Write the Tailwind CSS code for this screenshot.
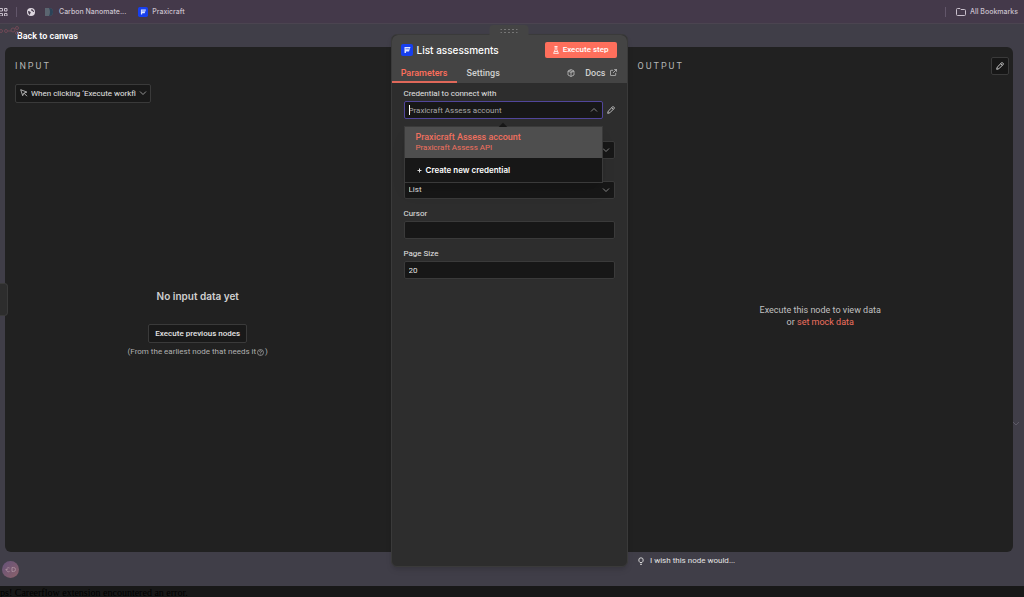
<!DOCTYPE html>
<html lang="en">
<head>
  <meta charset="UTF-8" />
  <meta name="viewport" content="width=device-width, initial-scale=1.0"/>
  <title>List assessments</title>
  <script src="https://cdn.jsdelivr.net/npm/@tailwindcss/browser@4"></script>
</head>
<body class="flex h-screen flex-col overflow-hidden bg-[#403e48] font-['Roboto',sans-serif] text-[8px] leading-3 text-[#e4e4e4]">

  <!-- Bookmarks bar -->
  <nav class="flex h-6 shrink-0 items-center border-b border-[#4b4450] bg-[#44394a] pt-px pr-1.5 font-['Inter',sans-serif] text-[7px] font-medium text-[#c9c0cc]">
    <svg class="size-2" viewBox="0 0 8 8" fill="none" stroke="#c9c0cc" stroke-width="1"><path d="M0 .5h2.500v2.500H0M4.500.5h2.500v2.500H4.500zM0 5.500h2.500V8H0M4.500 5.500h2.500V8H4.500z"/></svg>
    <span class="ml-2 h-2.5 w-px bg-[#62566a]"></span>
    <a href="#" class="ml-2.5 block" aria-label="Home page">
      <svg class="size-2" viewBox="0 0 16 16"><circle cx="8" cy="8" r="8" fill="#ddd6df"/><path d="M2 6l4 1 2 3-2 1v3C3 12 2 9 2 6zM9 2l-1 3 3 1 1 2 2 0C14 6 12 3 9 2z" fill="#44394a"/></svg>
    </a>
    <a href="#" class="ml-2.5 flex items-center gap-1.5">
      <svg class="size-2" viewBox="0 0 8 8"><path d="M0 0h4a4 4 0 010 8H0z" fill="#5b6570"/><path d="M4 0a4 4 0 010 8q2-4 0-8" fill="#2c4358"/></svg>
      Carbon Nanomate...
    </a>
    <a href="#" class="ml-3 flex items-center gap-1">
      <svg class="size-2.5" viewBox="0 0 12 12"><rect width="12" height="12" rx="2" fill="#173fee"/><path d="M3.500 3v6H5V7.500h3L9.500 3z" fill="#dfe6ff"/><path d="M4.500 4.800h4" stroke="#173fee" stroke-width=".7"/></svg>
      Praxicraft
    </a>
    <span class="ml-auto h-2.5 w-px bg-[#62566a]"></span>
    <a href="#" class="ml-2.5 flex items-center gap-1">
      <svg class="h-2 w-2.5" viewBox="0 0 10 8" fill="none" stroke="#c9c0cc"><path d="M.5 1.500q0-1 1-1H4l1 1h3.500q1 0 1 1v4q0 1-1 1h-7q-1 0-1-1z"/></svg>
      All Bookmarks
    </a>
  </nav>

  <main class="relative flex min-h-0 flex-1 flex-col pr-[11px] pl-[5px]">
    <!-- Canvas bits showing behind the panels -->
    <svg class="absolute top-0 left-0 h-3 w-5" viewBox="0 0 20 12" fill="none" stroke="#754957" stroke-width=".9"><circle cx="1" cy="7" r="1.500"/><circle cx="6" cy="7" r="1.500"/><path d="M8 7h3"/><circle cx="13" cy="6" r="2"/><circle cx="17" cy="4" r="1.500"/><circle cx="17" cy="9" r="1.500"/></svg>
    <svg class="absolute right-1 bottom-[158px] h-2 w-2" viewBox="0 0 8 8" fill="none" stroke="#5d5a66"><path d="M1 2l3 3 3-3"/></svg>

    <div class="flex h-[23px] shrink-0 items-center pt-px pl-3">
      <a href="#" class="text-[9px] font-semibold text-white">Back to canvas</a>
    </div>

    <div class="grid min-h-0 flex-1 grid-cols-[1fr_237px_1fr]">
      <!-- Input -->
      <section class="flex flex-col rounded-l-md bg-[#212121] px-2.5 pt-[13px]">
        <h2 class="text-[9px] tracking-[2px] text-[#b5b5b5]">INPUT</h2>
        <div class="relative mt-3 w-[136px] self-start">
          <select aria-label="Input node" class="block h-[19px] w-full appearance-none rounded-xs border border-[#3a3a3a] bg-[#191919] pr-3.5 pl-[15px] text-[8px] text-[#e4e4e4]">
            <option>When clicking ‘Execute workflow’</option>
          </select>
          <svg class="pointer-events-none absolute top-[5px] left-[5px] size-2" viewBox="0 0 8 8" fill="none" stroke="#d0d0d0" stroke-width=".8"><path d="M.7.7l2 6 1.200-2.600 3-1zM4 4.200l3 3"/></svg>
          <svg class="pointer-events-none absolute top-[5px] right-1 size-2" viewBox="0 0 8 8" fill="none" stroke="#a0a0a0" stroke-width=".9"><path d="M1 2.500l3 3 3-3"/></svg>
        </div>
        <div class="flex flex-1 flex-col items-center pt-[187px]">
          <p class="font-['Inter',sans-serif] text-[10px] font-semibold text-[#d0d0d0]">No input data yet</p>
          <button class="mt-[22px] h-[19px] rounded-xs border border-[#3a3a3a] bg-[#191919] px-1.5 text-[8px] font-medium text-[#e4e4e4]">Execute previous nodes</button>
          <p class="mt-[3px] flex items-center gap-px text-[#b0b0b0]">(From the earliest node that needs it
            <svg class="size-[7px]" viewBox="0 0 8 8" fill="none" stroke="#b0b0b0" stroke-width=".8"><circle cx="4" cy="4" r="3.400"/><path d="M2.800 3q.2-1 1.200-1t1.200 1q0 .6-1.200 1.200v.6M4 5.500v.7"/></svg>)
          </p>
        </div>
      </section>

      <!-- Node settings -->
      <section class="relative z-10 -mt-[13px] -mb-[15px] flex flex-col rounded-md border border-[#3a3a3a] bg-[#2d2d2d] shadow-md">
        <div class="absolute -top-[10px] left-1/2 flex h-[11px] w-[39px] -translate-x-1/2 items-center justify-center rounded-t-sm bg-[#444444]">
          <svg class="h-1 w-[17px]" viewBox="0 0 17 4" fill="#a8a8a8"><path d="M0 0h1v1H0zM4 0h1v1H4zM8 0h1v1H8zM12 0h1v1h-1zM16 0h1v1h-1zM0 3h1v1H0zM4 3h1v1H4zM8 3h1v1H8zM12 3h1v1h-1zM16 3h1v1h-1z"/></svg>
        </div>
        <header class="rounded-t-md bg-[#444444]">
          <div class="flex h-[30px] items-center pr-2.5 pl-[9px]">
            <svg class="size-3" viewBox="0 0 12 12"><rect width="12" height="12" rx="2" fill="#173fee"/><path d="M3.500 3v6H5V7.500h3L9.500 3z" fill="#dfe6ff"/><path d="M4.500 4.800h4" stroke="#173fee" stroke-width=".7"/></svg>
            <h1 class="ml-1 font-['Inter',sans-serif] text-[10px] font-medium text-white">List assessments</h1>
            <button class="ml-auto flex h-4 items-center gap-1 rounded-xs bg-[#ff6f5c] px-2 text-[8px] font-medium text-white">
              <svg class="h-2 w-1.5" viewBox="0 0 6 8" fill="none" stroke="#fff" stroke-width=".8"><path d="M1.500.5h3M2.200.5v3L.6 7.400h4.800L3.800 3.500v-3M1.500 5.500h3"/></svg>
              Execute step
            </button>
          </div>
          <div class="flex h-[18px] items-stretch pr-2.5 text-[9px] font-medium text-[#d0d0d0]">
            <button class="flex w-[65px] justify-center border-b-2 border-[#e0685a] pt-0.5 text-[#ff6f5c]">Parameters</button>
            <button class="ml-2.5 flex pt-0.5">Settings</button>
            <svg class="mt-1 ml-auto size-2" viewBox="0 0 8 8" fill="none" stroke="#c0c0c0" stroke-width=".8"><path d="M4 .5l3 1.500v4L4 7.500 1 6V2zM1 2l3 1.500L7 2M4 3.500v4M2.500 1.300l3 1.500"/></svg>
            <a href="#" class="ml-2.5 flex gap-1 pt-0.5">Docs
              <svg class="mt-0.5 size-[7px]" viewBox="0 0 8 8" fill="none" stroke="#c0c0c0" stroke-width=".9"><path d="M3.500 1.500H1q-.5 0-.5.5v5q0 .5.500.5h5q.5 0 .5-.5V4.500M4.800.5h2.700v2.700M7.500.5L3.500 4.500"/></svg>
            </a>
          </div>
        </header>

        <form class="flex flex-col gap-[9px] px-3 pt-[5px]">
          <div>
            <label for="credential" class="block h-[13px] text-[8px]">Credential to connect with</label>
            <div class="flex items-center">
              <div class="relative w-[199px]">
                <input id="credential" type="text" placeholder="Praxicraft Assess account" class="block h-[18px] w-full rounded-xs border border-[#51469a] bg-[#171717] px-1 text-[8px] placeholder:text-[#a8a8a8]"/>
                <span class="absolute top-1 left-[5px] h-2.5 w-px bg-white"></span>
                <svg class="absolute top-[5px] right-[5px] size-2" viewBox="0 0 8 8" fill="none" stroke="#909090" stroke-width=".9"><path d="M1 5.500l3-3 3 3"/></svg>

                <!-- Credential menu -->
                <div class="absolute top-[25px] left-0 z-20 w-full border border-[#3a3a3a] bg-[#171717] shadow-lg">
                  <span class="absolute -top-[3px] left-1/2 size-1.5 -translate-x-1/2 rotate-45 bg-[#171717]"></span>
                  <button type="button" class="relative block h-[31px] w-full bg-[#4e4e4e] pl-[11px] text-left text-[#f0705f]">
                    <span class="block text-[9px] leading-[11px] font-medium">Praxicraft Assess account</span>
                    <span class="block text-[8px] leading-[10px]">Praxicraft Assess API</span>
                  </button>
                  <button type="button" class="flex h-6 w-full items-center gap-[3px] pl-[11px] font-['Inter',sans-serif] text-[8px] font-semibold text-white">
                    <svg class="size-[7px]" viewBox="0 0 7 7" stroke="#ddd"><path d="M3.500 1.500v4M1.500 3.500h4"/></svg>
                    Create new credential
                  </button>
                </div>
              </div>
              <button type="button" aria-label="Edit credential" class="ml-1">
                <svg class="size-2" viewBox="0 0 8 8" fill="none" stroke="#d0d0d0" stroke-width=".9"><path d="M.7 7.300l.5-2.100L5.500.9q.6-.5 1.200 0l.4.4q.5.600 0 1.200L2.800 6.800zM4.800 1.700l1.500 1.500"/></svg>
              </button>
            </div>
          </div>
          <div>
            <label for="resource" class="block h-[13px] text-[8px]"></label>
            <div class="relative">
              <select id="resource" aria-label="Resource" class="block h-[18px] w-full appearance-none rounded-xs border border-[#3a3a3a] bg-[#171717] px-1 text-[8px]"></select>
              <svg class="pointer-events-none absolute top-[5px] right-[5px] size-2" viewBox="0 0 8 8" fill="none" stroke="#909090" stroke-width=".9"><path d="M1 2.500l3 3 3-3"/></svg>
            </div>
          </div>
          <div>
            <label for="operation" class="block h-[13px] text-[8px]"></label>
            <div class="relative">
              <select id="operation" aria-label="Operation" class="block h-[18px] w-full appearance-none rounded-xs border border-[#3a3a3a] bg-[#171717] px-1 text-[8px]">
                <option>List</option>
              </select>
              <svg class="pointer-events-none absolute top-[5px] right-[5px] size-2" viewBox="0 0 8 8" fill="none" stroke="#909090" stroke-width=".9"><path d="M1 2.500l3 3 3-3"/></svg>
            </div>
          </div>
          <div>
            <label for="cursor" class="block h-[13px] text-[8px]">Cursor</label>
            <input id="cursor" type="text" class="block h-[18px] w-full rounded-xs border border-[#3a3a3a] bg-[#171717] px-1 text-[8px]"/>
          </div>
          <div>
            <label for="pageSize" class="block h-[13px] text-[8px]">Page Size</label>
            <input id="pageSize" type="text" value="20" class="block h-[18px] w-full rounded-xs border border-[#3a3a3a] bg-[#171717] px-1 text-[8px]"/>
          </div>
        </form>
      </section>

      <!-- Output -->
      <section class="flex flex-col rounded-r-md bg-[#212121] pt-[10px] pr-1 pl-2.5">
        <div class="flex items-center justify-between">
          <h2 class="text-[9px] tracking-[2px] text-[#b5b5b5]">OUTPUT</h2>
          <button aria-label="Edit output" class="flex size-[18px] items-center justify-center rounded-xs border border-[#3a3a3a] bg-[#171717]">
            <svg class="size-2" viewBox="0 0 8 8" fill="none" stroke="#e0e0e0" stroke-width=".9"><path d="M.7 7.300l.5-2.100L5.500.9q.6-.5 1.200 0l.4.4q.5.600 0 1.200L2.800 6.800zM4.800 1.700l1.500 1.500"/></svg>
          </button>
        </div>
        <p class="flex-1 pt-[229px] pr-1.5 text-center text-[9px] text-[#c0c0c0]">Execute this node to view data<br/>or <a href="#" class="text-[#f0705f]">set mock data</a></p>
      </section>
    </div>

    <div class="flex h-[34px] shrink-0 items-start">
      <a href="#" class="mt-[3px] ml-[633px] flex items-center gap-1.5 text-[8px] text-[#e4e4e4]">
        <svg class="h-2 w-1.5" viewBox="0 0 6 8" fill="none" stroke="#e4e4e4" stroke-width=".9"><path d="M2 5.500Q.8 4.500.8 3a2.200 2.200 0 014.400 0Q5.200 4.500 4 5.500zM2 7.300h2"/></svg>
        I wish this node would...
      </a>
    </div>

    <!-- Drawer handle and avatar over the canvas edge -->
    <span class="absolute top-[259px] left-0 h-[33px] w-2 rounded-r-sm border border-l-0 border-[#3a3a3a] bg-[#2d2d2d]"></span>
    <svg class="absolute bottom-2 left-0.5 size-[17px]" viewBox="0 0 17 17"><defs><linearGradient id="av" x1="0" y1="0" x2="1" y2="1"><stop offset="0" stop-color="#655279"/><stop offset="1" stop-color="#8c626a"/></linearGradient></defs><circle cx="8.500" cy="8.500" r="8.500" fill="url(#av)"/><path d="M7.500 7a2 2 0 100 3.500M10 6.500v4h1.500a2 2 0 000-4zM3.500 8.500h2" fill="none" stroke="#a58a99"/></svg>
  </main>

  <footer class="h-[11px] shrink-0 overflow-hidden bg-[#181818] font-['Liberation_Serif',serif] text-[10px] leading-[13px] whitespace-nowrap text-black">ps! Careerflow extension encountered an error.</footer>

</body>
</html>
